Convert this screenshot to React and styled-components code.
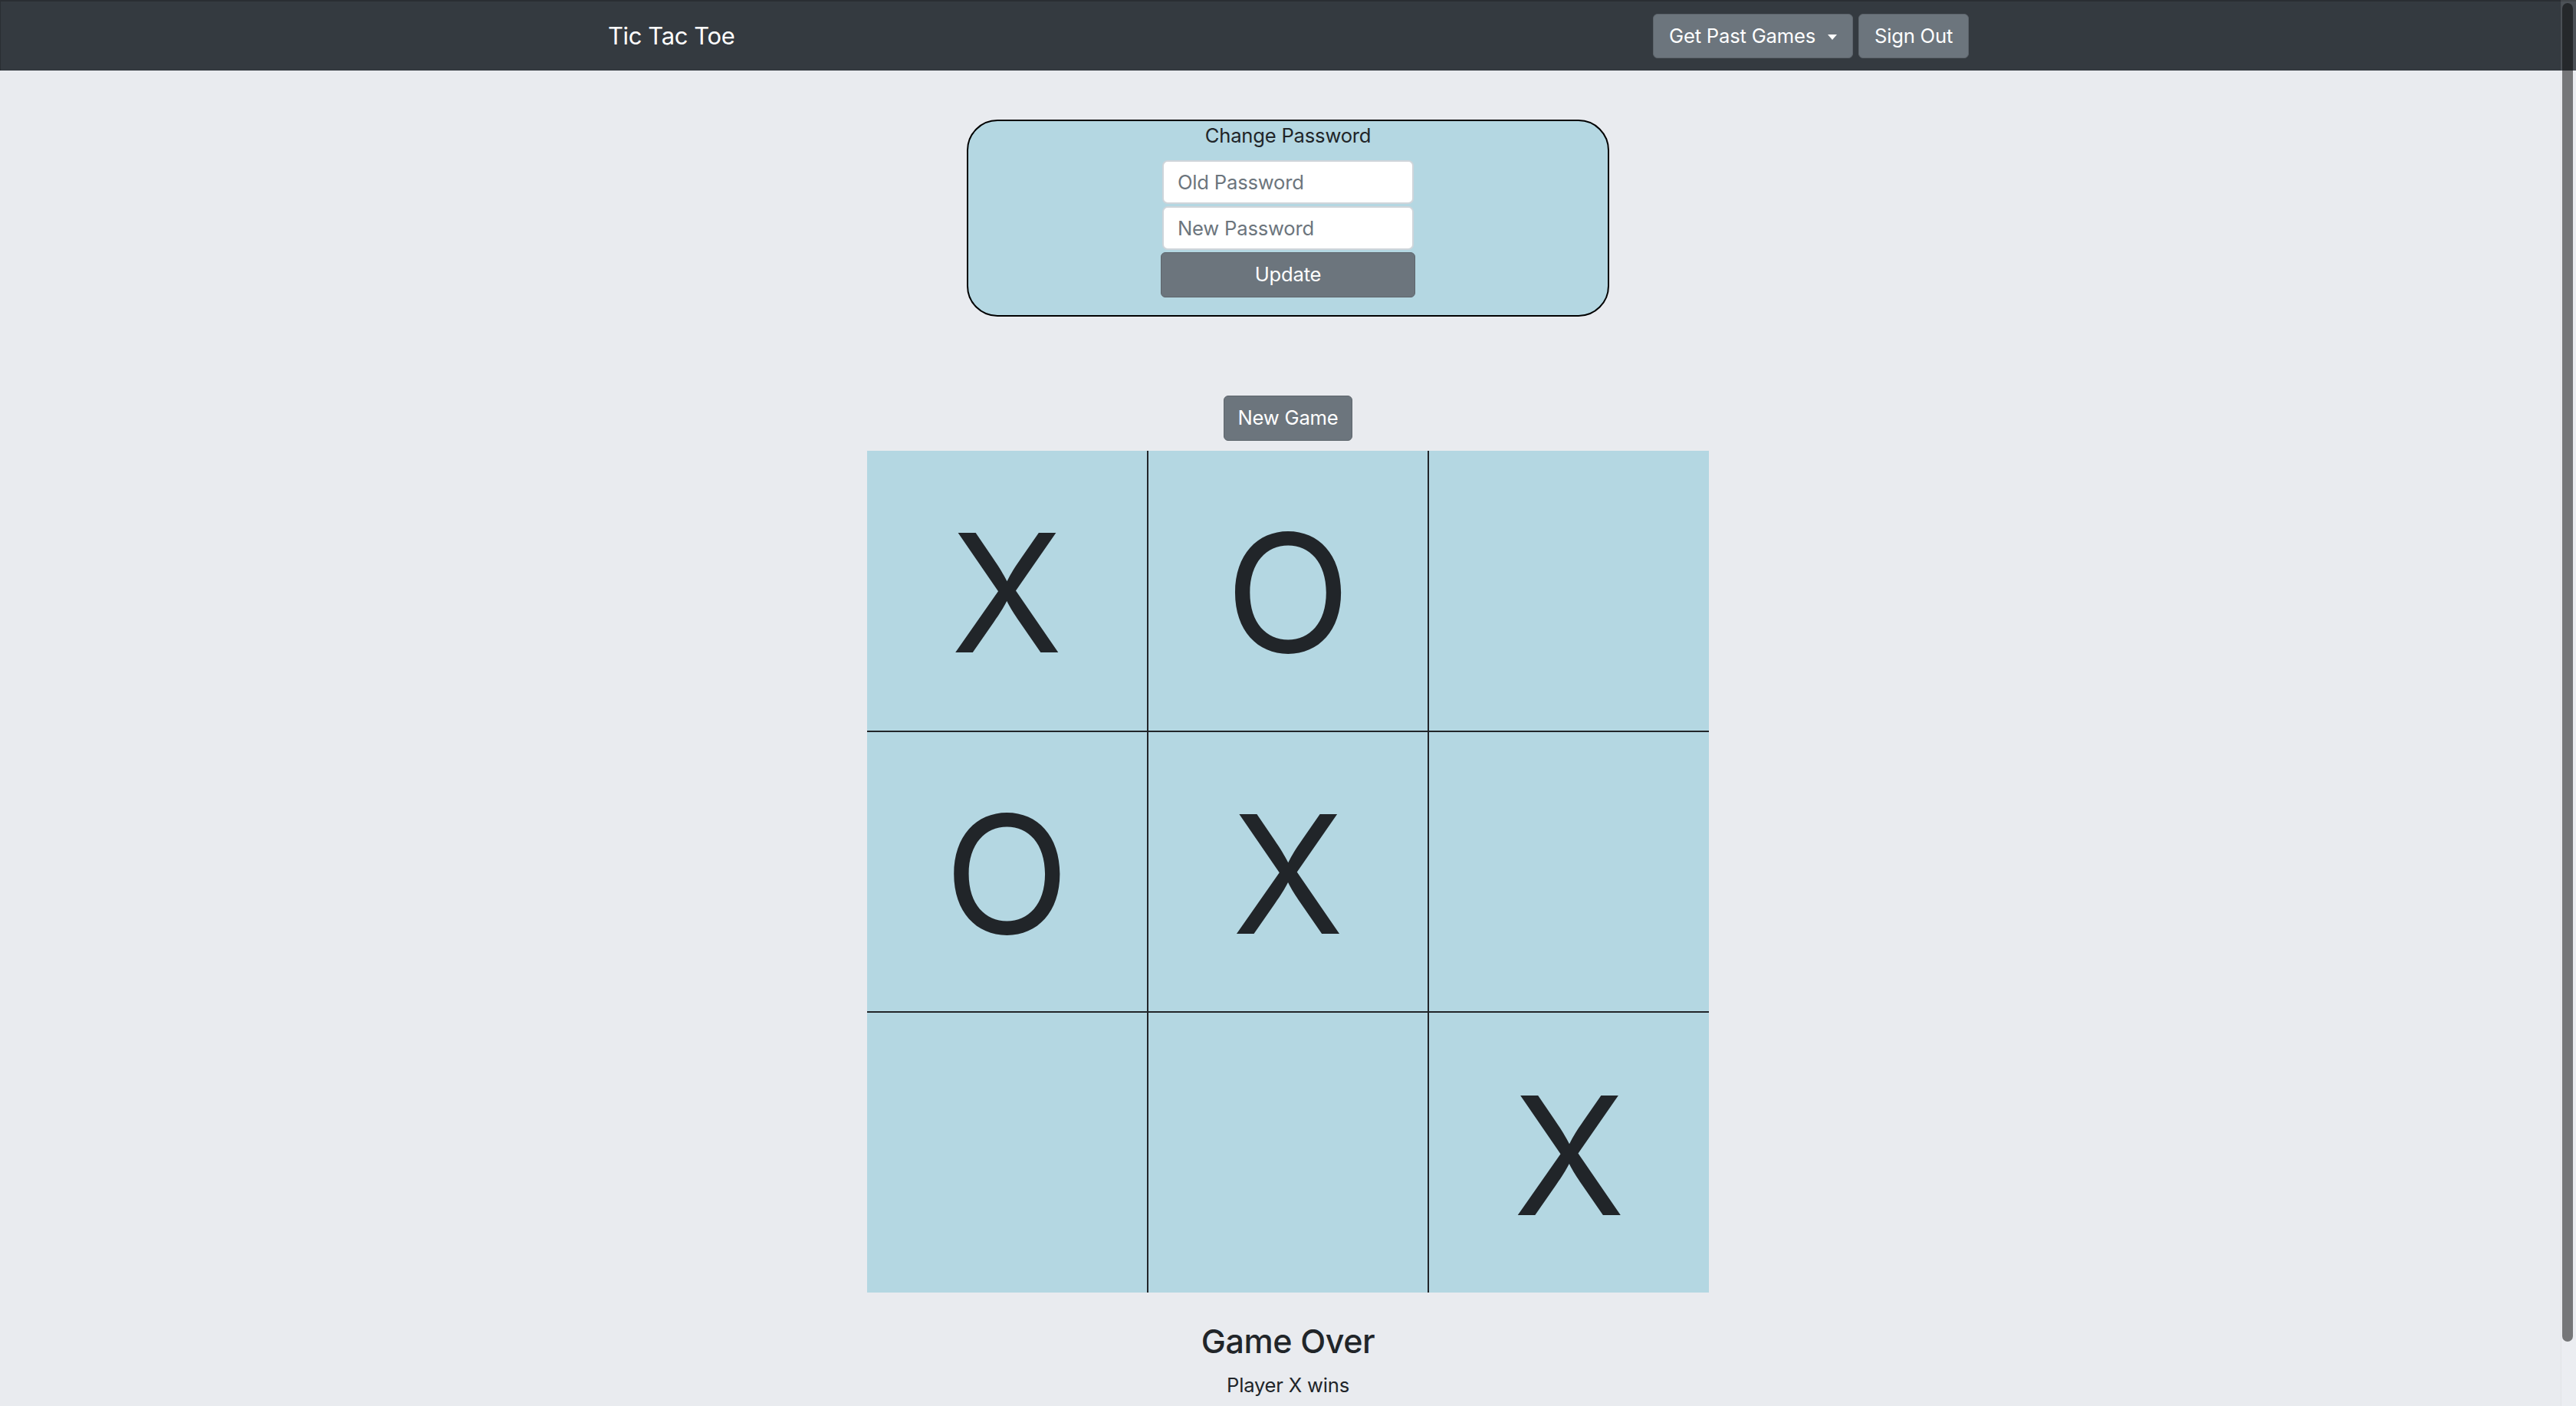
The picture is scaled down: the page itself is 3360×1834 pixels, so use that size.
import React from "react";
import styled, { createGlobalStyle } from "styled-components";

const GlobalStyle = createGlobalStyle`
  * { box-sizing: border-box; }
  html, body {
    margin: 0;
    padding: 0;
    height: 100%;
    overflow: hidden;
  }
  body {
    background: #e9ebef;
    font-family: Inter, "Helvetica Neue", Arial, sans-serif;
    font-size: 25.6px;
    line-height: 1.5;
    color: #212529;
    letter-spacing: -0.2px;
  }
`;

const Navbar = styled.nav`
  height: 92px;
  background: #343a40;
  border-top: 2px solid #2a2e33;
  border-left: 1px solid #2a2e33;
  display: flex;
  justify-content: center;
`;

const NavInner = styled.div`
  width: 1775px;
  display: flex;
  align-items: center;
  justify-content: space-between;
`;

const Brand = styled.a`
  color: #ffffff;
  font-size: 31px;
  line-height: 1.5;
  text-decoration: none;
  letter-spacing: -0.4px;
`;

const NavActions = styled.div`
  display: flex;
  gap: 7px;
`;

const Button = styled.button`
  display: inline-flex;
  align-items: center;
  justify-content: center;
  white-space: nowrap;
  height: ${(p) => p.$h || 58}px;
  width: ${(p) => (p.$w ? `${p.$w}px` : "auto")};
  padding: 0;
  background: #6c757d;
  color: #ffffff;
  border: 1px solid #5e656c;
  border-radius: 6px;
  font-family: inherit;
  font-size: 25.6px;
  letter-spacing: -0.2px;
  line-height: 1.5;
  cursor: pointer;
`;

const Caret = styled.span`
  display: inline-block;
  width: 0;
  height: 0;
  margin-left: 16px;
  margin-top: 2px;
  border-top: 7px solid #ffffff;
  border-left: 6.5px solid transparent;
  border-right: 6.5px solid transparent;
`;

const Main = styled.main`
  display: flex;
  flex-direction: column;
  align-items: center;
  padding-top: 64px;
`;

const PasswordCard = styled.form`
  width: 838px;
  border: 2px solid #000000;
  border-radius: 40px;
  background: #b4d7e2;
  display: flex;
  flex-direction: column;
  align-items: center;
  padding: 0 0 23px;
`;

const CardTitle = styled.div`
  line-height: 38px;
  margin-bottom: 13px;
  color: #212529;
`;

const Fields = styled.div`
  display: flex;
  flex-direction: column;
  align-items: center;
  gap: 3px;
`;

const Input = styled.input`
  width: 328px;
  height: 57px;
  border: 2px solid #cfd5da;
  border-radius: 7px;
  background: #ffffff;
  padding: 0 18px;
  font-family: inherit;
  font-size: 25.6px;
  letter-spacing: -0.2px;
  color: #212529;
  outline: none;
  &::placeholder {
    color: #6c757d;
  }
`;

const NewGameButton = styled(Button)`
  margin-top: 103px;
`;

const Board = styled.div`
  margin-top: 13px;
  width: 1098px;
  height: 1098px;
  display: grid;
  grid-template-columns: repeat(3, 1fr);
  grid-template-rows: repeat(3, 1fr);
  gap: 2px;
  background: #212529;
`;

const Cell = styled.div`
  background: #b4d7e2;
  display: flex;
  align-items: center;
  justify-content: center;
  font-size: 214px;
  line-height: 1;
  padding-top: 8px;
  color: #212529;
  letter-spacing: 0;
`;

const StatusTitle = styled.h3`
  font-size: 43px;
  font-weight: 500;
  line-height: 1.2;
  margin: 38px 0 12.8px;
  letter-spacing: -0.4px;
`;

const StatusText = styled.p`
  margin: 0 0 25.6px;
`;

const ScrollTrack = styled.div`
  position: fixed;
  top: 0;
  right: 0;
  bottom: 0;
  width: 20px;
  background: rgba(255, 255, 255, 0.12);
  border-left: 1px solid rgba(0, 0, 0, 0.04);
`;

const ScrollThumb = styled.div`
  position: absolute;
  top: 4px;
  bottom: 84px;
  right: 4px;
  width: 14px;
  border-radius: 7px;
  background: rgba(0, 0, 0, 0.5);
`;

const board = ["X", "O", "", "O", "X", "", "", "", "X"];

export default function App() {
  return (
    <>
      <GlobalStyle />
      <Navbar>
        <NavInner>
          <Brand href="#">Tic Tac Toe</Brand>
          <NavActions>
            <Button type="button" $w={261}>
              Get Past Games
              <Caret />
            </Button>
            <Button type="button" $w={144}>
              Sign Out
            </Button>
          </NavActions>
        </NavInner>
      </Navbar>
      <Main>
        <PasswordCard onSubmit={(e) => e.preventDefault()}>
          <CardTitle>Change Password</CardTitle>
          <Fields>
            <Input type="password" placeholder="Old Password" />
            <Input type="password" placeholder="New Password" />
            <Button type="submit" $w={332} $h={59}>
              Update
            </Button>
          </Fields>
        </PasswordCard>
        <NewGameButton type="button" $w={168} $h={59}>
          New Game
        </NewGameButton>
        <Board>
          {board.map((v, i) => (
            <Cell key={i}>{v}</Cell>
          ))}
        </Board>
        <StatusTitle>Game Over</StatusTitle>
        <StatusText>Player X wins</StatusText>
      </Main>
      <ScrollTrack>
        <ScrollThumb />
      </ScrollTrack>
    </>
  );
}
